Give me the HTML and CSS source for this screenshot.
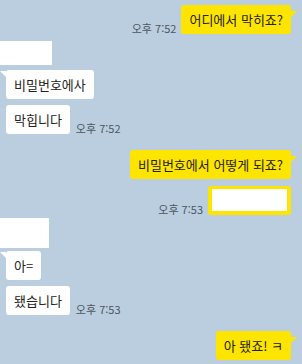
FILE: index.html
```html
<!DOCTYPE html>
<html lang="ko">
<head>
<meta charset="utf-8">
<link rel="stylesheet" href="styles.css">
</head>
<body>
<div class="chat">
  <div class="row me gap5">
    <span class="time">오후 7:52</span>
    <div class="bubble mine tail">어디에서 막히죠?</div>
  </div>
  <div class="block block-a gap7"></div>
  <div class="row you gap5">
    <div class="bubble theirs tail">비밀번호에사</div>
  </div>
  <div class="row you gap6">
    <div class="bubble theirs">막힙니다</div>
    <span class="time">오후 7:52</span>
  </div>
  <div class="row me gap16">
    <div class="bubble mine tail">비밀번호에서 어떻게 되죠?</div>
  </div>
  <div class="row me gap7">
    <span class="time">오후 7:53</span>
    <div class="framed"></div>
  </div>
  <div class="block block-b gap3"></div>
  <div class="row you gap3">
    <div class="bubble theirs tail">아=</div>
  </div>
  <div class="row you gap6">
    <div class="bubble theirs">됐습니다</div>
    <span class="time">오후 7:53</span>
  </div>
  <div class="row me gap16">
    <div class="bubble mine tail">아 됐죠! ㅋ</div>
  </div>
</div>
</body>
</html>
```
FILE: styles.css
```css
html, body {
  margin: 0;
  padding: 0;
  background: #bacee0;
  height: 100%;
}

body {
  font-family: "Noto Sans CJK KR", "Noto Sans", sans-serif;
  color: #222;
  overflow: hidden;
}

.chat {
  display: flex;
  flex-direction: column;
  padding: 0 11px 0 6px;
}

.row {
  display: flex;
  align-items: flex-end;
}

.row.me {
  justify-content: flex-end;
}

.row.you {
  justify-content: flex-start;
}

.gap3 { margin-top: 3px; }
.gap5 { margin-top: 5px; }
.gap6 { margin-top: 6px; }
.gap7 { margin-top: 7px; }
.gap16 { margin-top: 16px; }

.bubble {
  position: relative;
  font-size: 13px;
  line-height: 15px;
  padding: 7px 8px;
  border-radius: 3px;
  white-space: nowrap;
}

.mine {
  background: #fee500;
}

.theirs {
  background: #ffffff;
}

.mine.tail::after {
  content: "";
  position: absolute;
  left: 100%;
  top: 6px;
  width: 0;
  height: 0;
  border-top: 6px solid #fee500;
  border-right: 6px solid transparent;
}

.theirs.tail::before {
  content: "";
  position: absolute;
  right: 100%;
  top: 1px;
  width: 0;
  height: 0;
  border-top: 6px solid #ffffff;
  border-left: 6px solid transparent;
}

.time {
  font-size: 11px;
  line-height: 13px;
  color: #4e545c;
  white-space: nowrap;
  margin-bottom: -1px;
}

.me .time {
  margin-right: 5px;
}

.you .time {
  margin-left: 6px;
}

.framed {
  box-sizing: border-box;
  width: 83px;
  height: 29px;
  background: #ffffff;
  border: 4px solid #fee500;
  border-top-width: 3px;
  border-radius: 3px;
}

.block {
  background: #ffffff;
  margin-left: -6px;
}

.block-a {
  width: 52px;
  height: 24px;
}

.block-b {
  width: 49px;
  height: 30px;
}
```
